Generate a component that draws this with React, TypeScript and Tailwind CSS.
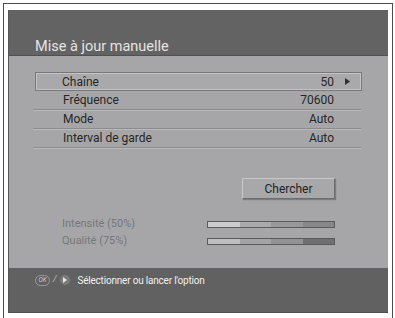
import React from "react";

const font = { fontFamily: "Roboto, 'Liberation Sans', sans-serif" };

function Row({ label, value }: { label: string; value: string }) {
  return (
    <div className="ml-[24px] w-[328px] h-[19px] flex flex-col">
      <div className="flex-1 flex items-center justify-between pl-[30px] pr-[27px] text-[12px] text-[#262626]">
        <span>{label}</span>
        <span>{value}</span>
      </div>
      <div className="h-px bg-[#8c8c8e]" />
      <div className="h-px bg-[#b9b9bc]" />
    </div>
  );
}

function Bar({ shades }: { shades: string[] }) {
  return (
    <div className="w-[128px] h-[7px] border border-[#5a5a5a] flex">
      {shades.map((s, i) => (
        <div key={i} className="flex-1 h-full" style={{ background: s }} />
      ))}
    </div>
  );
}

export default function App() {
  return (
    <div className="w-[395px] h-[318px] bg-white overflow-hidden" style={font}>
      <div className="ml-[3px] mt-[3px] w-[390px] h-[330px] border border-[#4c4c4c] pl-[4px] pt-[6px]">
        <div className="w-[380px] h-[303px] flex flex-col border-l border-[#555]">
          {/* header */}
          <div className="h-[46px] bg-[#636363] pl-[26px] pt-[28px] border-b border-[#505050]">
            <div className="text-[14.5px] leading-[18px] text-[#e4e4e4]">Mise à jour manuelle</div>
          </div>
          {/* body */}
          <div className="h-[212px] bg-[#a6a6a9] flex flex-col pt-[16px]">
            <div className="ml-[26px] w-[327px] h-[19px] border border-[#78787a] shadow-[inset_1px_1px_0_#c4c4c6,inset_-1px_-1px_0_#c4c4c6] bg-[#a9a9ac] flex items-center justify-between pl-[26px] pr-[11px] text-[12px] text-[#262626]">
              <span>Chaîne</span>
              <span className="flex items-center gap-[11px]">
                <span>50</span>
                <svg width="5" height="7" viewBox="0 0 5 7"><path d="M0 0 L5 3.5 L0 7Z" fill="#303030" /></svg>
              </span>
            </div>
            <Row label="Fréquence" value="70600" />
            <Row label="Mode" value="Auto" />
            <Row label="Interval de garde" value="Auto" />
            <div className="flex justify-end pr-[53px] mt-[30px]">
              <div className="w-[93px] h-[21px] flex items-center justify-center text-[12px] text-[#1f1f1f] bg-[#a8a8ab] border border-t-[#c9c9cb] border-l-[#c9c9cb] border-r-[#6c6c6e] border-b-[#6c6c6e] shadow-[1px_1px_1px_rgba(0,0,0,0.25)]">
                Chercher
              </div>
            </div>
            <div className="mt-[22px] flex flex-col gap-[10px] pl-[53px] text-[11px] text-[#777779]">
              <div className="flex items-center h-[7px]">
                <span className="w-[145px]">Intensité (50%)</span>
                <Bar shades={["#cbcbcd", "#aaaaad", "#98989b", "#88888b"]} />
              </div>
              <div className="flex items-center h-[7px]">
                <span className="w-[145px]">Qualité (75%)</span>
                <Bar shades={["#bdbdbf", "#a3a3a6", "#929295", "#6f6f72"]} />
              </div>
            </div>
          </div>
          {/* footer */}
          <div className="h-[45px] bg-[#616161] border-b border-[#4e4e4e] pl-[26px] pt-[6px]">
            <div className="flex items-center h-[12px] text-[10px] text-[#f0f0f0] tracking-[-0.2px]">
              <span className="w-[15px] h-[11px] rounded-full border border-[#9a9a9a] flex items-center justify-center text-[6.5px] italic text-[#c8c8c8] leading-none">OK</span>
              <span className="ml-[3px] text-[9px] italic text-[#c0c0c0]">/</span>
              <span className="ml-[4px] w-[10px] h-[10px] rounded-full bg-[#7a7a7a] flex items-center justify-center">
                <svg width="4" height="6" viewBox="0 0 4 6"><path d="M0 0 L4 3 L0 6Z" fill="#e8e8e8" /></svg>
              </span>
              <span className="ml-[7px]">Sélectionner ou lancer l'option</span>
            </div>
          </div>
        </div>
      </div>
    </div>
  );
}
